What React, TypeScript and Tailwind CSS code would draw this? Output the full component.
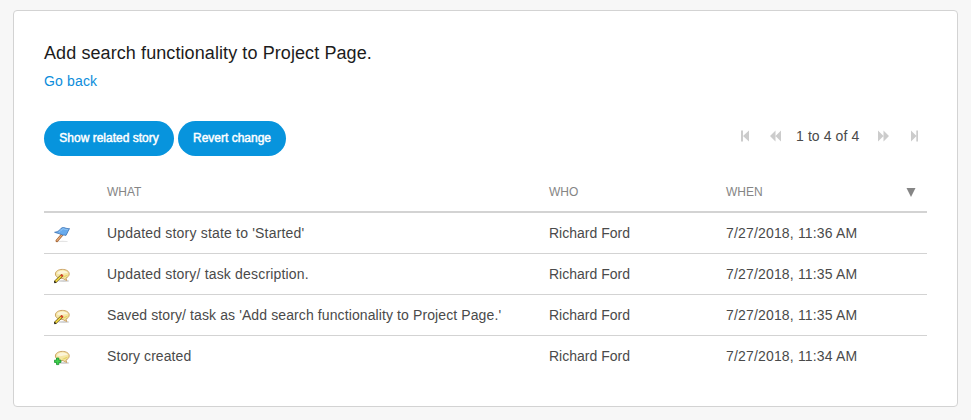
import type { ReactNode } from "react";

function FlagIcon() {
  return (
    <svg className="block h-4 w-4" viewBox="0 0 16 16">
      <ellipse cx="8.5" cy="14.4" rx="5.5" ry="0.7" fill="#d8d8d8" opacity="0.7" />
      <path d="M2.8 13.8 8.4 7.4" stroke="#a0602f" strokeWidth="2.6" strokeLinecap="round" />
      <path d="M3 13.5 8.4 7.4" stroke="#e8ab78" strokeWidth="1.2" strokeLinecap="round" />
      <path d="M0.6 5.3C2.8 4.8 4.8 4.2 6.2 2.4 7.4 0.6 9 0.1 10.6 0.7 12.2 1.5 13.8 1.7 15.5 1.6 14.2 3.6 13.6 5.8 12 8.4 10.4 7.8 8.8 8.5 7.2 7.4 5.4 6.3 2.8 6.4 0.6 5.3Z" fill="#68aaec" stroke="#3d74b4" strokeWidth="0.8" strokeLinejoin="round" />
      <path d="M4.8 5.2C6.8 4.4 7.2 2.2 9.4 1.8 10.8 2.6 12.4 2.6 13.8 2.5" fill="none" stroke="#98c9f6" strokeWidth="0.9" />
    </svg>
  );
}

function Bubble() {
  return (
    <>
      <ellipse cx="9.8" cy="13" rx="5.4" ry="0.9" fill="#c8c8c8" opacity="0.8" />
      <path d="M8.3 1.4C12.3 1.4 15.2 3.2 15.2 5.9 15.2 7.9 13.7 9.4 11.9 10L12.8 12.6 9 10.6C4.6 10.6 1.4 8.8 1.4 6 1.4 3.2 4.4 1.4 8.3 1.4Z" fill="#f5e6a4" stroke="#cda568" strokeWidth="1" />
      <path d="M3 5.6C3.4 3.6 5.8 2.5 8.3 2.5 11.2 2.5 13.4 3.4 13.8 5 10.5 4.6 7.5 7.2 3 5.6Z" fill="#fcf4d8" />
      <path d="M7.5 9.3C10.5 9.7 13.4 8.6 14 6.8 11.5 7 10 8.4 7.5 9.3Z" fill="#e6d566" />
    </>
  );
}

function BubbleEditIcon() {
  return (
    <svg className="block h-4 w-4" viewBox="0 0 16 16">
      <Bubble />
      <path d="M0.9 14.2 8.4 7" stroke="#6f5c1c" strokeWidth="2.8" />
      <path d="M1.5 13.6 7.6 7.8" stroke="#f8e040" strokeWidth="1.5" />
      <path d="M7.1 8.3 8.6 6.8" stroke="#dc3f2c" strokeWidth="2.3" />
      <path d="M0 15.3 0.6 12.9 2.4 14.6Z" fill="#1a1a1a" />
    </svg>
  );
}

function BubbleAddIcon() {
  return (
    <svg className="block h-4 w-4" viewBox="0 0 16 16">
      <Bubble />
      <path d="M2.5 8H4.8V10.2H7V12.4H4.8V14.6H2.5V12.4H0.4V10.2H2.5Z" fill="#3fd04c" stroke="#14902a" strokeWidth="0.8" />
    </svg>
  );
}

type Change = { icon: ReactNode; what: string; when: string; tracking: string };

const changes: Change[] = [
  { icon: <FlagIcon />, what: "Updated story state to 'Started'", when: "7/27/2018, 11:36 AM", tracking: "tracking-[0.19px]" },
  { icon: <BubbleEditIcon />, what: "Updated story/ task description.", when: "7/27/2018, 11:35 AM", tracking: "tracking-[0.18px]" },
  { icon: <BubbleEditIcon />, what: "Saved story/ task as 'Add search functionality to Project Page.'", when: "7/27/2018, 11:35 AM", tracking: "tracking-[0.105px]" },
  { icon: <BubbleAddIcon />, what: "Story created", when: "7/27/2018, 11:34 AM", tracking: "tracking-[0.08px]" },
];

const columns = "grid grid-cols-[63px_442px_177px_1fr] items-center";

export default function App() {
  return (
    <div className="h-[420px] bg-[#f7f7f7] pt-2.5 pl-[13px] font-['Liberation_Sans',Arial,sans-serif] text-sm text-[#4a4a4a]">
      <main className="h-[397px] w-[945px] rounded border border-[#d3d3d3] bg-white px-[30px] pt-[30px]">
        <h1 className="text-lg leading-6 tracking-[0.09px] text-[#1c1c1c]">Add search functionality to Project Page.</h1>
        <a className="mt-1.5 block w-fit leading-5 tracking-[0.15px] text-[#0b8ddb]" href="#">Go back</a>
        <div className="mt-[30px] flex h-[35px] items-center justify-between">
          <div className="flex gap-1 text-xs text-white [-webkit-text-stroke:0.45px_white]">
            <button className="h-[35px] w-[130px] rounded-full bg-[#0794dd] pb-0.5">Show related story</button>
            <button className="h-[35px] w-[108px] rounded-full bg-[#0794dd] pb-0.5">Revert change</button>
          </div>
          <nav className="mb-1.5 flex h-5 items-center pr-[9px] text-[#cccccc]">
            <svg className="mr-[21px] h-3 w-2" viewBox="0 0 8 12" fill="currentColor"><path d="M0 .5h2v11H0zM8 .5v11L2 6z" /></svg>
            <svg className="mr-[15px] h-3 w-[11px]" viewBox="0 0 11 12" fill="currentColor"><path d="M5.5 .5v11L0 6zM11 .5v11L5.5 6z" /></svg>
            <span className="w-[82px] tracking-[0.1px] text-[#4a4a4a]">1 to 4 of 4</span>
            <svg className="mr-[22px] h-3 w-[11px]" viewBox="0 0 11 12" fill="currentColor"><path d="M0 .5v11L5.5 6zM5.5 .5v11L11 6z" /></svg>
            <svg className="h-3 w-[7px]" viewBox="0 0 7 12" fill="currentColor"><path d="M0 .5v11L5.5 6zM5.3 .5H7v11H5.3z" /></svg>
          </nav>
        </div>
        <div className="mt-[15px] w-[883px]">
          <div className={`${columns} h-[42px] border-b-2 border-[#d3d3d3] pt-0.5 text-xs text-[#858585]`}>
            <span />
            <span>WHAT</span>
            <span>WHO</span>
            <span className="flex items-center justify-between pr-[11px]">
              WHEN
              <svg className="h-[9px] w-[10px]" viewBox="0 0 10 9" fill="currentColor"><path d="M.5 0h9L5 9z" /></svg>
            </span>
          </div>
          {changes.map((change, index) => (
            <div key={index} className={`${columns} h-[41px] border-b border-[#d3d3d3] last:h-10 last:border-b-0`}>
              <span className="pt-[3px] pl-[9.5px]">{change.icon}</span>
              <span className={change.tracking}>{change.what}</span>
              <span>Richard Ford</span>
              <span className="tracking-[0.17px]">{change.when}</span>
            </div>
          ))}
        </div>
      </main>
    </div>
  );
}
